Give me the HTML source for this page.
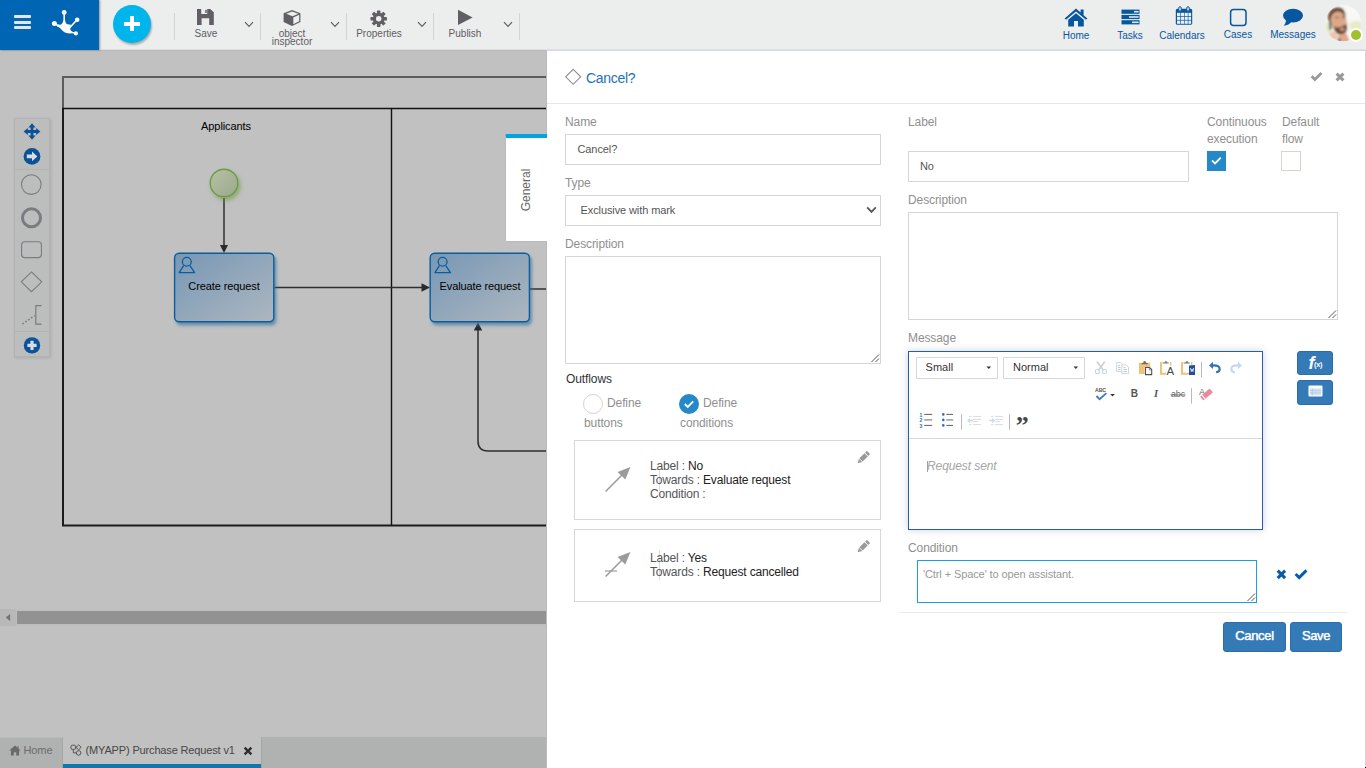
<!DOCTYPE html>
<html lang="en">
<head>
<meta charset="utf-8">
<title>Purchase Request v1</title>
<style>
*{box-sizing:border-box;margin:0;padding:0}
html,body{width:1366px;height:768px;overflow:hidden}
body{position:relative;background:#c1c1c1;font-family:"Liberation Sans",Arial,sans-serif;font-size:12px;color:#333;letter-spacing:-.1px}
.abs{position:absolute}
/* ---------- header ---------- */
#hdr{position:absolute;left:0;top:0;width:1366px;height:50px;background:#eceded}
#brand{position:absolute;left:0;top:0;width:99px;height:50px;background:#0065b3;box-shadow:1px 0 2px rgba(0,0,0,.38)}
#plus{position:absolute;left:113px;top:5px;width:38px;height:38px;border-radius:50%;background:#00b4ec;box-shadow:1px 2px 2px rgba(0,0,0,.28)}
.tsep{position:absolute;top:13px;width:1px;height:27px;background:#d3d4d5}
.tlabel{position:absolute;text-align:center;font-size:10px;line-height:8px;color:#5f5e63;white-space:nowrap;letter-spacing:0}
.nav{position:absolute;text-align:center;font-size:10px;color:#06579f;white-space:nowrap;letter-spacing:0}
/* ---------- canvas ---------- */
#canvas{position:absolute;left:0;top:50px;width:546px;height:718px;background:#c1c1c1;overflow:hidden}
.ctext{position:absolute;font-size:11px;color:#000;white-space:nowrap;text-align:center}
/* ---------- bottom tabs ---------- */
#tabs{position:absolute;left:0;top:737px;width:546px;height:31px;background:#b0b1b1}
/* ---------- panel ---------- */
#panel{position:absolute;left:546px;top:50px;width:820px;height:718px;background:#fff;border-top:1px solid #d5d8dc;border-right:1px solid #d5d7db;border-left:1px solid #b9babb}
.lbl{position:absolute;font-size:12px;color:#8f8f8f;white-space:nowrap;line-height:14px}
.inp{position:absolute;border:1px solid #d4d7da;background:#fff;font-size:11px;color:#555;white-space:nowrap}
.card{position:absolute;border:1px solid #d6d9dc;background:#fff}
.ctl{position:absolute;font-size:12px;line-height:14px;color:#555;white-space:nowrap;letter-spacing:-.17px}
.ctl b{font-weight:normal;color:#222}
.btn{letter-spacing:-.35px;position:absolute;background:#337ab7;border:1px solid #2e6da4;border-radius:3px;color:#fff;font-size:13px;text-align:center;text-shadow:0 0 1px rgba(255,255,255,.6);-webkit-text-stroke:.25px #fff}
.combo{position:absolute;top:357px;width:82px;height:22px;border:1px solid #d8d8d8;font-size:11px;color:#333;line-height:19px;letter-spacing:0}
.vsep{position:absolute;width:1px;background:#c8c8c8}
</style>
</head>
<body>

<!-- ================= CANVAS ================= -->
<div id="canvas">
<svg class="abs" style="left:0;top:0" width="546" height="718" viewBox="0 50 546 718">
  <defs>
    <linearGradient id="tg" x1="0" y1="0" x2="1" y2="1">
      <stop offset="0" stop-color="#7797b5"/><stop offset="1" stop-color="#adb7c0"/>
    </linearGradient>
    <linearGradient id="sg" x1="0" y1="0" x2="1" y2="1">
      <stop offset="0" stop-color="#b7c1a6"/><stop offset="1" stop-color="#9ca78c"/>
    </linearGradient>
    <filter id="sh" x="-20%" y="-20%" width="150%" height="150%">
      <feGaussianBlur in="SourceAlpha" stdDeviation="1.8" result="b"/><feOffset in="b" dx="2" dy="3" result="o"/>
      <feFlood flood-color="#2e6da2" flood-opacity=".6" result="f"/><feComposite in="f" in2="o" operator="in" result="s"/>
      <feMerge><feMergeNode in="s"/><feMergeNode in="SourceGraphic"/></feMerge>
    </filter>
    <filter id="shg" x="-30%" y="-30%" width="170%" height="170%">
      <feGaussianBlur in="SourceAlpha" stdDeviation="2" result="b"/><feOffset in="b" dx="2" dy="3" result="o"/>
      <feFlood flood-color="#6e9a3c" flood-opacity=".6" result="f"/><feComposite in="f" in2="o" operator="in" result="s"/>
      <feMerge><feMergeNode in="s"/><feMergeNode in="SourceGraphic"/></feMerge>
    </filter>
  </defs>
  <!-- pool -->
  <path d="M63 108 V77 H546" fill="none" stroke="#5c5c5c" stroke-width="2"/>
  <path d="M63 108 V525.5 H546" fill="none" stroke="#1c1c1c" stroke-width="2"/>
  <path d="M62 108.5 H546" fill="none" stroke="#111" stroke-width="1.4"/>
  <path d="M391.5 108 V525" fill="none" stroke="#111" stroke-width="1.4"/>
  <!-- flows -->
  <g fill="none" stroke="#2f2f2f" stroke-width="1.5">
    <path d="M224 198 V246"/>
    <path d="M274.5 287.5 H422"/>
    <path d="M530 289 H546"/>
    <path d="M478 329 V441 Q478 451 488 451 H546"/>
  </g>
  <g fill="#2a2a2a">
    <path d="M220 245 H228 L224 253 Z"/>
    <path d="M421.5 283.3 V291.7 L430 287.5 Z"/>
    <path d="M473.8 330.5 H482.2 L478 322.5 Z"/>
  </g>
  <!-- start event -->
  <circle cx="224" cy="183" r="13.8" fill="url(#sg)" stroke="#6b9c49" stroke-width="1.4" filter="url(#shg)"/>
  <!-- tasks -->
  <rect x="174.6" y="253.2" width="99.2" height="68.6" rx="4.5" fill="url(#tg)" stroke="#0d5d9b" stroke-width="1.4" filter="url(#sh)"/>
  <rect x="430.2" y="253.2" width="99.2" height="68.6" rx="4.5" fill="url(#tg)" stroke="#0d5d9b" stroke-width="1.4" filter="url(#sh)"/>
  <g fill="none" stroke="#0d5d9b" stroke-width="1.3" stroke-linejoin="round">
    <circle cx="186.8" cy="261.8" r="4.4"/><path d="M183.6 265.6 L179.2 272.7 H194.6 L190 265.6"/>
    <circle cx="442.6" cy="261.8" r="4.4"/><path d="M439.4 265.6 L435 272.7 H450.4 L445.8 265.6"/>
  </g>
</svg>
<div class="ctext" style="left:176px;top:70px;width:100px">Applicants</div>
<div class="ctext" style="left:174px;top:230px;width:100px">Create request</div>
<div class="ctext" style="left:430px;top:230px;width:100px">Evaluate request</div>

<!-- palette -->
<div class="abs" style="left:14px;top:68px;width:36px;height:239px;background:#bcbebe;border:1px solid #b1b2b2;box-shadow:1px 1px 3px rgba(0,0,0,.12)"></div>
<svg class="abs" style="left:14px;top:68px" width="36" height="239" viewBox="14 118 36 239">
  <path d="M15 169.5 H49 M15 331.5 H49" stroke="#b3b4b4" stroke-width="1"/>
  <!-- move -->
  <g fill="#0b5299">
    <path d="M32 123.2 L35.6 127.4 H33.4 V130.1 H36.1 V127.9 L40.4 131.5 L36.1 135.1 V132.9 H33.4 V135.6 H35.6 L32 139.8 L28.4 135.6 H30.6 V132.9 H27.9 V135.1 L23.6 131.5 L27.9 127.9 V130.1 H30.6 V127.4 H28.4 Z"/>
    <circle cx="32" cy="156.4" r="8.4"/>
    <circle cx="32" cy="345.4" r="8.2"/>
  </g>
  <path d="M26.8 154.6 H32 V151.6 L37.4 156.4 L32 161.2 V158.2 H26.8 Z" fill="#d8dde2"/>
  <path d="M30.4 340.8 H33.6 V343.8 H36.6 V347 H33.6 V350 H30.4 V347 H27.4 V343.8 H30.4 Z" fill="#d8dde2"/>
  <g fill="none" stroke="#7b7b80">
    <circle cx="31.3" cy="184.6" r="9.8" stroke-width="1.1"/>
    <circle cx="31.5" cy="217.8" r="9" stroke-width="3"/>
    <rect x="21.6" y="241.8" width="19.8" height="15.8" rx="3" stroke-width="1.1"/>
    <path d="M31.5 271.9 L41.7 281.8 L31.5 291.7 L21.3 281.8 Z" stroke-width="1.1"/>
    <path d="M41.6 305.7 H35.8 V324.2 H41.6" stroke-width="1.2"/>
    <path d="M22.4 324 L34.6 315.6" stroke-width="1.6" stroke-dasharray="1.6 1.9"/>
  </g>
</svg>

<!-- scrollbar -->
<div class="abs" style="left:0;top:559px;width:546px;height:17px;background:#bebebe"></div><div class="abs" style="left:0;top:559px;width:16px;height:17px;background:#b8b8b8"></div>
<div class="abs" style="left:17px;top:561px;width:529px;height:13px;background:#929292"></div>
<svg class="abs" style="left:4px;top:562px" width="8" height="11" viewBox="0 0 8 11"><path d="M6.1 1.9 V9.1 L1.8 5.5 Z" fill="#727272"/></svg>
</div>

<!-- bottom tabs -->
<div id="tabs">
  <div class="abs" style="left:0;top:0;width:63px;height:31px;border-right:1px solid #a4a5a5;border-top:1px solid #b8b9b9"></div>
  <div class="abs" style="left:63px;top:0;width:198px;height:31px;background:#c1c1c1"></div>
  <div class="abs" style="left:63px;top:27px;width:198px;height:4px;background:#0b78b2"></div>
  <div class="abs" style="left:261px;top:0;width:1px;height:31px;background:#a4a5a5"></div>
  <svg class="abs" style="left:9px;top:8px" width="12" height="11" viewBox="0 0 12 11"><path d="M6 0.6 L0.3 5.6 H1.9 V10.4 H4.8 V7.2 H7.2 V10.4 H10.1 V5.6 H11.7 L9.6 3.7 V1.3 H8.4 V2.7 Z" fill="#6a6a6a"/></svg>
  <div class="abs" style="left:23.5px;top:7px;font-size:11px;color:#6b6b6b;line-height:13px;letter-spacing:-.1px">Home</div>
  <svg class="abs" style="left:70px;top:7px" width="13" height="12" viewBox="0 0 13 12"><g fill="none" stroke="#555" stroke-width="1"><rect x="1" y="1.2" width="4.6" height="4.2" rx="1.3"/><path d="M8.6 0.9 L11.2 3.3 L8.6 5.7 L6 3.3 Z"/><circle cx="8.6" cy="8.9" r="2.3"/><path d="M5.6 3.3 H6 M3.3 5.4 V8.9 H6.3"/></g></svg>
  <div class="abs" style="left:85.5px;top:7px;font-size:11px;color:#474747;line-height:13px;white-space:nowrap;letter-spacing:-.15px">(MYAPP) Purchase Request v1</div>
  <svg class="abs" style="left:243px;top:9px" width="10" height="10" viewBox="0 0 10 10"><path d="M1.6 1.6 L8.4 8.4 M8.4 1.6 L1.6 8.4" stroke="#2d2d2d" stroke-width="2.3"/></svg>
</div>

<!-- ================= HEADER ================= -->
<div id="hdr">
  <div class="abs" style="left:99px;top:49px;width:1267px;height:1px;background:#dde0e4"></div>
  <div class="abs" style="left:0;top:50px;width:546px;height:1px;background:#b9b9b9"></div>
  <div id="brand">
    <div class="abs" style="left:14px;top:15px;width:17px;height:3px;background:#e3e6ea;border-radius:1px"></div>
    <div class="abs" style="left:14px;top:20.5px;width:17px;height:3px;background:#e3e6ea;border-radius:1px"></div>
    <div class="abs" style="left:14px;top:26px;width:17px;height:3px;background:#e3e6ea;border-radius:1px"></div>
    <svg class="abs" style="left:50px;top:8px" width="32" height="30" viewBox="50 8 32 30">
      <g stroke="#fff" stroke-width="1.6" fill="none" stroke-linecap="round">
        <path d="M64.2 12.5 V28"/><path d="M54.6 23.6 L63 28.5"/><path d="M77 19.8 L69 28.5"/><path d="M75.6 33.3 L68 31.5"/>
      </g>
      <g fill="#fff">
        <circle cx="64.2" cy="12.4" r="2.4"/><circle cx="54.4" cy="23.4" r="2.5"/><circle cx="77.2" cy="19.7" r="2.3"/><circle cx="75.9" cy="33.4" r="2.1"/>
        <path d="M57.5 24.2 Q62.6 26 63.2 20.5 H65.2 Q65.4 25.4 70.6 24.4 Q71.5 26 70.2 28.6 Q69.6 30.4 72 31.4 L71.4 33.4 Q64 33.6 61.2 29.2 Q60 27.2 57 26.4 Z"/>
      </g>
    </svg>
  </div>
  <div id="plus">
    <div class="abs" style="left:11px;top:16.5px;width:16px;height:4px;background:#fff"></div>
    <div class="abs" style="left:17px;top:11px;width:4px;height:15px;background:#fff"></div>
  </div>

  <div class="tsep" style="left:174px"></div>
  <div class="tsep" style="left:260px"></div>
  <div class="tsep" style="left:346px"></div>
  <div class="tsep" style="left:433px"></div>
  <div class="tsep" style="left:519px"></div>

  <!-- save -->
  <svg class="abs" style="left:196px;top:8px" width="19" height="18" viewBox="0 0 19 18"><path d="M1 1 H14.2 L17.8 4.2 V17 H13.2 V10.2 H5.6 V17 H1 Z M5.2 1 V6 H11.2 V1 Z" fill="#615f64" fill-rule="evenodd"/><rect x="9.2" y="1.8" width="1.5" height="3.2" fill="#615f64"/></svg>
  <div class="tlabel" style="left:176px;top:30px;width:60px">Save</div>
  <!-- object inspector -->
  <svg class="abs" style="left:282px;top:9px" width="20" height="18" viewBox="0 0 20 18"><path d="M10 1 L18.4 4.2 V13 L10 17 L1.6 13 V4.2 Z" fill="#615f64"/><path d="M10 2.4 L16.4 4.7 L10.6 7.2 L4.2 4.8 Z" fill="#eceded"/><path d="M11.3 8.4 L17.2 5.8 V12.3 L11.3 15.2 Z" fill="#eceded"/></svg>
  <div class="tlabel" style="left:262px;top:30px;width:60px">object<br>inspector</div>
  <!-- properties -->
  <svg class="abs" style="left:370px;top:10px" width="17.4" height="17.4" viewBox="-9.5 -9.5 19 19"><g fill="#615f64"><circle r="6.4"/><g id="tooth"><rect x="-1.9" y="-9" width="3.8" height="4" rx=".6"/></g><use href="#tooth" transform="rotate(45)"/><use href="#tooth" transform="rotate(90)"/><use href="#tooth" transform="rotate(135)"/><use href="#tooth" transform="rotate(180)"/><use href="#tooth" transform="rotate(225)"/><use href="#tooth" transform="rotate(270)"/><use href="#tooth" transform="rotate(315)"/></g><circle r="3" fill="#eceded"/></svg>
  <div class="tlabel" style="left:349px;top:30px;width:60px">Properties</div>
  <!-- publish -->
  <svg class="abs" style="left:457px;top:9px" width="17" height="17" viewBox="0 0 17 17"><path d="M1 0.8 L15.6 8.4 L1 16 Z" fill="#615f64"/></svg>
  <div class="tlabel" style="left:435px;top:30px;width:60px">Publish</div>
  <!-- chevrons -->
  <svg class="abs" style="left:244px;top:21px" width="10" height="7" viewBox="0 0 10 7"><path d="M1 1.2 L5 5.4 L9 1.2" fill="none" stroke="#5f5e63" stroke-width="1.2"/></svg>
  <svg class="abs" style="left:330px;top:21px" width="10" height="7" viewBox="0 0 10 7"><path d="M1 1.2 L5 5.4 L9 1.2" fill="none" stroke="#5f5e63" stroke-width="1.2"/></svg>
  <svg class="abs" style="left:417px;top:21px" width="10" height="7" viewBox="0 0 10 7"><path d="M1 1.2 L5 5.4 L9 1.2" fill="none" stroke="#5f5e63" stroke-width="1.2"/></svg>
  <svg class="abs" style="left:503px;top:21px" width="10" height="7" viewBox="0 0 10 7"><path d="M1 1.2 L5 5.4 L9 1.2" fill="none" stroke="#5f5e63" stroke-width="1.2"/></svg>

  <!-- right nav -->
  <svg class="abs" style="left:1064px;top:8px" width="24" height="19" viewBox="0 0 24 19"><path d="M12 0.6 L0.6 10.4 L2 11.8 L12 3.4 L22 11.8 L23.4 10.4 L19.6 7.2 V1.4 H16.6 V4.6 Z" fill="#06579f"/><path d="M12 5.2 L4.2 11.8 V18.4 H10 V13 H14 V18.4 H19.8 V11.8 Z" fill="#06579f"/></svg>
  <div class="nav" style="left:1046px;top:30px;width:60px">Home</div>
  <svg class="abs" style="left:1121px;top:9px" width="19" height="16" viewBox="0 0 19 16"><g fill="#06579f"><rect x="0.5" y="0.6" width="18" height="4.2"/><rect x="0.5" y="5.9" width="18" height="4.2"/><rect x="0.5" y="11.2" width="18" height="4.2"/></g><g fill="#dfe6ee"><rect x="13" y="1.9" width="4.6" height="1.6"/><rect x="8" y="7.2" width="9.6" height="1.6"/><rect x="11" y="12.5" width="6.6" height="1.6"/></g></svg>
  <div class="nav" style="left:1100px;top:30px;width:60px">Tasks</div>
  <svg class="abs" style="left:1175px;top:6px" width="18" height="20" viewBox="0 0 18 20"><rect x="0.8" y="2.8" width="16.4" height="16" rx="1.6" fill="#06579f"/><g fill="#e9eef3"><rect x="2.0" y="6.8" width="3.2" height="3.2"/><rect x="5.8" y="6.8" width="3.2" height="3.2"/><rect x="9.6" y="6.8" width="3.2" height="3.2"/><rect x="13.4" y="6.8" width="2.7" height="3.2"/><rect x="2.0" y="10.7" width="3.2" height="3.2"/><rect x="5.8" y="10.7" width="3.2" height="3.2"/><rect x="9.6" y="10.7" width="3.2" height="3.2"/><rect x="13.4" y="10.7" width="2.7" height="3.2"/><rect x="2.0" y="14.6" width="3.2" height="3.2"/><rect x="5.8" y="14.6" width="3.2" height="3.2"/><rect x="9.6" y="14.6" width="3.2" height="3.2"/><rect x="13.4" y="14.6" width="2.7" height="3.2"/></g><g fill="#eceded" stroke="#06579f" stroke-width="1"><rect x="3.8" y="0.7" width="2.4" height="4.6" rx="1.2"/><rect x="11.8" y="0.7" width="2.4" height="4.6" rx="1.2"/></g></svg>
  <div class="nav" style="left:1152px;top:30px;width:60px">Calendars</div>
  <svg class="abs" style="left:1228px;top:8px" width="20" height="19" viewBox="0 0 20 19"><rect x="2.6" y="1.4" width="15.4" height="16.2" rx="3" fill="none" stroke="#06579f" stroke-width="1.5"/></svg>
  <div class="nav" style="left:1208px;top:29px;width:60px">Cases</div>
  <svg class="abs" style="left:1281px;top:8px" width="23" height="19" viewBox="0 0 23 19"><ellipse cx="12" cy="7.6" rx="10" ry="6.8" fill="#06579f"/><path d="M5 10.5 Q5.4 15 2.6 17.8 Q8 17.4 11 13 Z" fill="#06579f"/></svg>
  <div class="nav" style="left:1263px;top:29px;width:60px">Messages</div>
  <!-- avatar -->
  <svg class="abs" style="left:1325px;top:5px" width="37" height="37" viewBox="0 0 37 37">
    <defs><clipPath id="avc"><circle cx="18.2" cy="18.2" r="18.1"/></clipPath><filter id="avb" x="-20%" y="-20%" width="140%" height="140%"><feGaussianBlur stdDeviation="0.9"/></filter></defs>
    <g clip-path="url(#avc)">
      <rect width="37" height="37" fill="#f6f6f4"/>
      <g filter="url(#avb)">
        <ellipse cx="31" cy="21" rx="7" ry="5" fill="#e6edc6"/>
        <ellipse cx="3" cy="24" rx="4" ry="7" fill="#e3eacb"/>
        <ellipse cx="27" cy="9" rx="8" ry="7" fill="#f8f8f7"/>
        <path d="M3 13 Q3 3 12 2.4 Q19 2 20.5 9 L20 13 L5 20 Z" fill="#6a4c38"/>
        <ellipse cx="13.6" cy="16.5" rx="8" ry="10" fill="#dba888" transform="rotate(-12 13.6 16.5)"/>
        <path d="M8.5 21 Q12 25 21.5 19 Q23 27 18 29.5 Q12 30.5 9.5 25 Z" fill="#6b4a38"/>
        <ellipse cx="17.2" cy="24.3" rx="2.6" ry="1.4" fill="#d9a58a"/>
        <path d="M10 12.5 H14 M17 11.8 H20.4" stroke="#5b4030" stroke-width="1.2"/>
        <path d="M13.5 30 L21 28 L25 37 H12 Z" fill="#e0a98c"/>
        <ellipse cx="8.5" cy="31" rx="4.2" ry="4.6" fill="#eec5ae"/>
        <rect x="4.2" y="17" width="2.2" height="8" rx="1" fill="#50665c"/>
        <path d="M12 36 L15 33 L16 37 Z" fill="#4c5660"/>
      </g>
    </g>
  </svg>
  <div class="abs" style="left:1349px;top:28px;width:14px;height:14px;border-radius:50%;background:#fff"></div>
  <div class="abs" style="left:1350.8px;top:29.8px;width:10.4px;height:10.4px;border-radius:50%;background:#9ec22e"></div>
</div>

<!-- ================= PANEL ================= -->
<div id="panel"></div>
<div class="abs" style="left:505px;top:134px;width:42px;height:108px;background:#fff;border-top:4px solid #00a3e8;border-left:1px solid #b9babb;border-bottom:1px solid #b9babb;border-radius:2px 0 0 2px"></div>
<div class="abs" style="left:496px;top:182.5px;width:60px;height:14px;line-height:14px;text-align:center;font-size:12px;color:#666;transform:rotate(-90deg);letter-spacing:0">General</div>

<!-- title row -->
<svg class="abs" style="left:564px;top:68px" width="18" height="18" viewBox="0 0 18 18"><path d="M9.2 1.3 L16.7 8.8 L9.2 16.3 L1.7 8.8 Z" fill="#fff" stroke="#8d8d8d" stroke-width="1.1"/></svg>
<div class="abs" id="ttl" style="left:586px;top:70px;font-size:14px;line-height:17px;color:#1d71b8;white-space:nowrap;letter-spacing:-.3px">Cancel?</div>
<svg class="abs" style="left:1310px;top:71px" width="13" height="11" viewBox="0 0 13 11"><path d="M1.6 5.2 L4.9 8.5 L11.4 2" fill="none" stroke="#999" stroke-width="2.8"/></svg>
<svg class="abs" style="left:1335.4px;top:72px" width="10" height="10" viewBox="0 0 10 10"><path d="M1.6 1.6 L8.4 8.4 M8.4 1.6 L1.6 8.4" stroke="#999" stroke-width="3"/></svg>
<div class="abs" style="left:547px;top:103px;width:818px;height:1px;background:#e4e6e8"></div>

<!-- left column -->
<div class="lbl" style="left:565px;top:115px">Name</div>
<div class="inp" style="left:565px;top:134px;width:316px;height:31px;line-height:29px;padding-left:11.5px">Cancel?</div>
<div class="lbl" style="left:565px;top:176px">Type</div>
<div class="inp" style="left:565px;top:195px;width:316px;height:31px;line-height:29px;padding-left:14.5px">Exclusive with mark</div>
<svg class="abs" style="left:865.5px;top:206px" width="11" height="8" viewBox="0 0 11 8"><path d="M1.2 1.4 L5.5 5.8 L9.8 1.4" fill="none" stroke="#58585c" stroke-width="1.9"/></svg>
<div class="lbl" style="left:565px;top:237px">Description</div>
<div class="inp" style="left:565px;top:256px;width:316px;height:108px"></div>
<svg class="abs" style="left:870px;top:353px" width="10" height="10" viewBox="0 0 10 10"><path d="M9 1.5 L1.5 9 M9 5.5 L5.5 9" stroke="#555" stroke-width="1"/></svg>

<div class="abs" style="left:566px;top:372px;font-size:12px;line-height:14px;color:#333">Outflows</div>
<div class="abs" style="left:583px;top:394px;width:20px;height:20px;border-radius:50%;border:1px solid #d9d4cd;background:#fff"></div>
<div class="lbl" style="left:607px;top:396px">Define</div>
<div class="lbl" style="left:584px;top:416px">buttons</div>
<div class="abs" style="left:679px;top:394px;width:20px;height:20px;border-radius:50%;background:#2488c9"></div>
<svg class="abs" style="left:683px;top:399px" width="12" height="10" viewBox="0 0 12 10"><path d="M1.8 5 L4.8 8 L10.2 2.4" fill="none" stroke="#fff" stroke-width="1.9"/></svg>
<div class="lbl" style="left:703px;top:396px">Define</div>
<div class="lbl" style="left:680px;top:416px">conditions</div>

<div class="card" style="left:574px;top:440px;width:307px;height:80px"></div>
<div class="card" style="left:574px;top:529px;width:307px;height:73px"></div>
<div class="abs" style="left:659px;top:469px;width:1px;height:22px;background:#d9dbde"></div>
<div class="abs" style="left:659px;top:550px;width:1px;height:30px;background:#d9dbde"></div>
<svg class="abs" style="left:600px;top:462px" width="36" height="34" viewBox="600 462 36 34"><path d="M605.6 491.5 L622 475" stroke="#9b9b9b" stroke-width="1.6" fill="none"/><path d="M630.4 467 L625.3 479.6 L617.6 471.9 Z" fill="#9b9b9b"/></svg>
<svg class="abs" style="left:600px;top:547px" width="36" height="34" viewBox="600 547 36 34"><path d="M605.6 576.5 L622 560" stroke="#9b9b9b" stroke-width="1.6" fill="none"/><path d="M630.4 552 L625.3 564.6 L617.6 556.9 Z" fill="#9b9b9b"/><path d="M605 571 H617" stroke="#9b9b9b" stroke-width="1.2"/></svg>
<div class="ctl" style="left:650px;top:459px">Label : <b>No</b></div>
<div class="ctl" style="left:650px;top:473px">Towards : <b>Evaluate request</b></div>
<div class="ctl" style="left:650px;top:487px">Condition :</div>
<div class="ctl" style="left:650px;top:551px">Label : <b>Yes</b></div>
<div class="ctl" style="left:650px;top:565px">Towards : <b>Request cancelled</b></div>
<svg class="abs" style="left:856.2px;top:451px" width="14" height="14" viewBox="0 0 14 14"><g transform="rotate(45 7 7)" fill="#999"><rect x="4.7" y="-0.8" width="4.6" height="2.6" rx=".6"/><rect x="4.7" y="2.6" width="4.6" height="7.2"/><path d="M4.7 10.4 H9.3 L7 14.6 Z"/></g></svg>
<svg class="abs" style="left:856.2px;top:540px" width="14" height="14" viewBox="0 0 14 14"><g transform="rotate(45 7 7)" fill="#999"><rect x="4.7" y="-0.8" width="4.6" height="2.6" rx=".6"/><rect x="4.7" y="2.6" width="4.6" height="7.2"/><path d="M4.7 10.4 H9.3 L7 14.6 Z"/></g></svg>
<!-- right column -->
<div class="lbl" style="left:908px;top:115px">Label</div>
<div class="inp" style="left:908px;top:151px;width:281px;height:31px;line-height:29px;padding-left:11px">No</div>
<div class="lbl" style="left:1207px;line-height:17px;top:114px">Continuous<br>execution</div>
<div class="abs" style="left:1207px;top:151px;width:19px;height:20px;background:#2488c9"></div>
<svg class="abs" style="left:1210px;top:155px" width="13" height="11" viewBox="0 0 13 11"><path d="M2 5.4 L5 8.4 L10.8 2.6" fill="none" stroke="#fff" stroke-width="1.9"/></svg>
<div class="lbl" style="left:1282px;top:114px;line-height:17px">Default<br>flow</div>
<div class="abs" style="left:1281px;top:151px;width:20px;height:20px;background:#fff;border:1px solid #d9d3cb"></div>
<div class="lbl" style="left:908px;top:193px">Description</div>
<div class="inp" style="left:908px;top:212px;width:430px;height:108px"></div>
<svg class="abs" style="left:1327px;top:309px" width="10" height="10" viewBox="0 0 10 10"><path d="M9 1.5 L1.5 9 M9 5.5 L5.5 9" stroke="#555" stroke-width="1"/></svg>
<div class="lbl" style="left:908px;top:331px">Message</div>

<!-- editor -->
<div class="abs" style="left:908px;top:351px;width:355px;height:179px;border:1px solid #2d5ba9;background:#fff;box-shadow:0 0 7px rgba(60,90,150,.28)"></div>
<div class="abs" style="left:909px;top:438px;width:353px;height:1px;background:#d9d9d9"></div>
<div class="combo" style="left:916px;padding-left:8.6px">Small</div>
<div class="combo" style="left:1003px;padding-left:9px">Normal</div>
<svg class="abs" style="left:986px;top:366px" width="6" height="4" viewBox="0 0 6 4"><path d="M0.5 0.6 H5.1 L2.8 2.9 Z" fill="#333"/></svg>
<svg class="abs" style="left:1073px;top:366px" width="6" height="4" viewBox="0 0 6 4"><path d="M0.5 0.6 H5.1 L2.8 2.9 Z" fill="#333"/></svg>
<svg class="abs" style="left:1090px;top:358px" width="160" height="22" viewBox="1090 358 160 22">
  <!-- cut -->
  <g fill="none" stroke-linecap="round">
    <path d="M1097.3 362 L1103.2 370 M1104.5 362 L1098.6 370" stroke="#cdcdcd" stroke-width="1.5"/>
    <circle cx="1097.4" cy="371.4" r="2.1" stroke="#c3d8ee" stroke-width="1.1"/><circle cx="1104.4" cy="371.4" r="2.1" stroke="#c3d8ee" stroke-width="1.1"/>
  </g>
  <!-- copy -->
  <g fill="#fff" stroke="#d3d3d3" stroke-width="1">
    <path d="M1116.6 362.5 H1120.6 L1122.6 364.5 V371.5 H1116.6 Z"/>
    <path d="M1121.8 364.9 H1126.2 L1128.6 367.3 V373.6 H1121.8 Z"/>
  </g>
  <path d="M1118 365.5 H1120 M1118 367.5 H1120.5 M1118 369.5 H1120.5 M1123.4 367.5 H1125.4 M1123.4 369.5 H1127 M1123.4 371.5 H1127" stroke="#a9c7e6" stroke-width=".9"/>
  <!-- paste -->
  <path d="M1139 362.8 H1150.2 V367 H1144.6 V374 H1139 Z" fill="#ecc27c"/>
  <path d="M1141.6 364.3 H1147.8 V363 H1146.2 Q1146.2 361 1144.7 361 Q1143.2 361 1143.2 363 H1141.6 Z" fill="#6f6f6f"/>
  <path d="M1145.5 367.5 H1149.6 L1151.7 369.6 V374.6 H1145.5 Z" fill="#fff" stroke="#505050" stroke-width="1.1"/>
  <path d="M1149.4 367.6 V369.9 H1151.6" fill="none" stroke="#777" stroke-width=".8"/>
  <!-- paste text -->
  <path d="M1160 362.2 H1163 V363.2 H1162 V372.8 H1166 V374.8 H1160 Z" fill="#ecc27c"/>
  <rect x="1170" y="362.2" width="1.4" height="3.6" fill="#ecc27c"/>
  <path d="M1163 363.6 H1168.8 V362.6 H1167.4 Q1166.9 361 1165.9 361 Q1164.9 361 1164.4 362.6 H1163 Z" fill="#7a7a7a"/>
  <text x="1166.4" y="374.8" font-family="Liberation Sans, sans-serif" font-size="11.5" fill="#4a4a4a">A</text>
  <!-- paste word -->
  <path d="M1181 362.2 H1184 V363.2 H1183 V372.8 H1189 V374.8 H1181 Z" fill="#ecc27c"/>
  <rect x="1191" y="362.2" width="1.4" height="3" fill="#ecc27c"/>
  <path d="M1184 363.6 H1189.8 V362.6 H1188.4 Q1187.9 361 1186.9 361 Q1185.9 361 1185.4 362.6 H1184 Z" fill="#7a7a7a"/>
  <path d="M1189 365.6 L1195 365 V374.9 H1189 Z" fill="#1f4f9e"/>
  <path d="M1190.5 368 L1191.3 371.6 L1192.1 369 L1192.9 371.6 L1193.7 368" fill="none" stroke="#dbe4f3" stroke-width=".9"/>
  <path d="M1201.5 362 V377.6" stroke="#b9b9b9" stroke-width="1"/>
  <!-- undo -->
  <path d="M1209 365.4 L1213 361.8 V364.2 Q1221 364 1220.8 369.4 Q1220.4 373 1216.2 373.2 L1216 371.2 Q1218.6 371 1218.6 369 Q1218.6 366.6 1213 366.6 V369 Z" fill="#3572b6"/>
  <!-- redo -->
  <path d="M1242 365.4 L1238 361.8 V364.2 Q1230 364 1230.2 369.4 Q1230.6 373 1234.8 373.2 L1235 371.2 Q1232.4 371 1232.4 369 Q1232.4 366.6 1238 366.6 V369 Z" fill="#c5d9ed"/>
</svg>
<svg class="abs" style="left:1090px;top:385px" width="130" height="22" viewBox="1090 385 130 22">
  <!-- spell -->
  <text x="1095" y="391.6" font-family="Liberation Sans, sans-serif" font-size="5.6" font-weight="bold" fill="#555" textLength="11" lengthAdjust="spacingAndGlyphs">ABC</text>
  <path d="M1096.4 396 L1099.6 399.2 L1106.4 393.2" fill="none" stroke="#3b7cc2" stroke-width="1.8"/>
  <path d="M1110.2 394 H1114.8 L1112.5 396.4 Z" fill="#333"/>
  <text x="1130.8" y="397.3" font-family="Liberation Sans, sans-serif" font-size="10" font-weight="bold" fill="#555">B</text>
  <text x="1154" y="397.3" font-family="Liberation Serif, serif" font-size="10.5" font-weight="bold" font-style="italic" fill="#555">I</text>
  <text x="1171" y="397.3" font-family="Liberation Sans, sans-serif" font-size="9.5" fill="#666" textLength="14" lengthAdjust="spacingAndGlyphs">abc</text>
  <path d="M1170.6 394.9 H1185.4" stroke="#666" stroke-width=".9"/>
  <path d="M1191.5 388.2 V403.7" stroke="#b9b9b9" stroke-width="1"/>
  <text x="1199" y="394.9" font-family="Liberation Sans, sans-serif" font-size="9" fill="#707070">A</text>
  <g transform="rotate(-40 1206.5 394.5)"><rect x="1200.2" y="392" width="12.6" height="5" rx=".8" fill="#e98a9c"/><rect x="1202" y="392" width="1.1" height="5" fill="#fff"/></g>
</svg>
<svg class="abs" style="left:915px;top:411px" width="120" height="22" viewBox="915 411 120 22">
  <g stroke="#5f5f5f" stroke-width="1"><path d="M924.2 414.4 H932.2 M924.2 425.4 H932.2 M946.3 414.4 H953.1 M946.3 425.4 H953.1"/></g>
  <g stroke="#a9a9a9" stroke-width="1.7"><path d="M924.2 419.9 H932.2 M946.3 419.9 H953.1"/></g>
  <g fill="#2f6db5">
    <text x="919.6" y="416.6" font-family="Liberation Sans, sans-serif" font-size="5" font-weight="bold">1</text>
    <text x="919.6" y="422.1" font-family="Liberation Sans, sans-serif" font-size="5" font-weight="bold">2</text>
    <text x="919.6" y="427.6" font-family="Liberation Sans, sans-serif" font-size="5" font-weight="bold">3</text>
    <circle cx="943.3" cy="414.4" r="1.3"/><circle cx="943.3" cy="419.9" r="1.3"/><circle cx="943.3" cy="425.4" r="1.3"/>
  </g>
  <path d="M961.5 414.2 V429.7 M1009.5 414.2 V429.7" stroke="#b9b9b9" stroke-width="1"/>
  <g stroke="#dcdcdc" stroke-width="1"><path d="M969 416.4 H971.6 M973 416.4 H981 M973 419.4 H981 M973 421.6 H978 M969 424.6 H971.6 M973 424.6 H981"/>
  <path d="M991 416.4 H993.6 M995 416.4 H1003 M995 419.4 H1003 M995 421.6 H1000 M991 424.6 H993.6 M995 424.6 H1003"/></g>
  <g fill="#c9dcef"><path d="M967 420.5 L970.2 417.8 V419.8 H973 V421.2 H970.2 V423.2 Z"/><path d="M995.2 420.5 L992 417.8 V419.8 H989.2 V421.2 H992 V423.2 Z"/></g>
  <text x="1015.8" y="434.2" font-family="Liberation Serif, serif" font-size="26" font-weight="bold" fill="#474747">”</text>
</svg>

<div class="abs" style="left:926.5px;top:461px;width:1px;height:10.5px;background:#a2a2a2"></div><div class="abs" style="left:927px;top:459px;font-size:12px;line-height:14px;font-style:italic;color:#a6a6a6;white-space:nowrap">Request sent</div>

<!-- fx buttons -->
<div class="btn" style="left:1297px;top:351px;width:36px;height:24px"></div>
<div class="btn" style="left:1297px;top:380px;width:36px;height:25px"></div>
<svg class="abs" style="left:1297px;top:351px" width="36" height="24" viewBox="1297 351 36 24"><text x="1308.6" y="368.8" font-family="Liberation Sans, sans-serif" font-size="18" font-weight="bold" font-style="italic" fill="#fff">f</text><text x="1314" y="367.4" font-family="Liberation Sans, sans-serif" font-size="7.4" font-weight="bold" fill="#fff" letter-spacing="-.3">(x)</text></svg>
<svg class="abs" style="left:1308px;top:385px" width="15" height="12" viewBox="0 0 15 12"><rect x="0.5" y="0.5" width="14" height="11" rx="1" fill="#fff"/><rect x="1.8" y="3.4" width="11.4" height="7" fill="#d5e3f1"/><path d="M1.8 5.6 H13.2 M1.8 7.9 H13.2 M4.4 3.4 V10.4" stroke="#a9c4de" stroke-width=".7"/></svg>

<!-- condition -->
<div class="lbl" style="left:908px;top:541px">Condition</div>
<div class="abs" style="left:917px;top:560px;width:340px;height:43px;border:1px solid #18a0e3;background:#fff;font-size:11px;color:#999;padding:7px 0 0 5px;line-height:13px;white-space:nowrap">'Ctrl + Space' to open assistant.</div>
<svg class="abs" style="left:1246px;top:592px" width="10" height="10" viewBox="0 0 10 10"><path d="M9 1.5 L1.5 9 M9 5.5 L5.5 9" stroke="#555" stroke-width="1"/></svg>
<svg class="abs" style="left:1276px;top:569px" width="11" height="11" viewBox="0 0 11 11"><path d="M1.7 1.7 L9.1 9.1 M9.1 1.7 L1.7 9.1" stroke="#075cab" stroke-width="3.1"/></svg>
<svg class="abs" style="left:1294px;top:568px" width="14" height="12" viewBox="0 0 14 12"><path d="M1.6 6 L5.2 9.6 L12.4 2.4" fill="none" stroke="#075cab" stroke-width="2.9"/></svg>
<div class="abs" style="left:899px;top:612px;width:448px;height:1px;background:#eaeaea"></div>
<div class="btn" style="left:1223px;top:622px;width:63px;height:30px;line-height:25px">Cancel</div>
<div class="btn" style="left:1290px;top:622px;width:52px;height:30px;line-height:25px">Save</div>


<div class="abs" style="left:1365px;top:767px;width:1px;height:1px;background:#000"></div>
</body>
</html>
